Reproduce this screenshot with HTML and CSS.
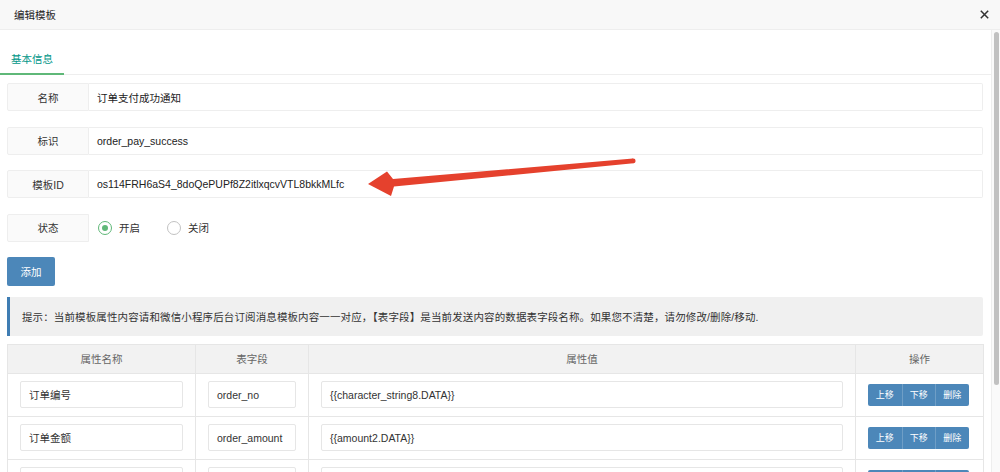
FILE: index.html
```html
<!DOCTYPE html>
<html lang="zh">
<head>
<meta charset="utf-8">
<title>编辑模板</title>
<link rel="stylesheet" href="styles.css">
</head>
<body>
<div class="dialog">
  <div class="dialog-header">
    <span class="dialog-title">编辑模板</span>
    <svg class="close" width="9" height="9" viewBox="0 0 9 9"><path d="M0.8 0.8L8.2 8.2M8.2 0.8L0.8 8.2" stroke="#333" stroke-width="1.5" fill="none"/></svg>
  </div>
  <div class="dialog-body">
    <div class="content">
      <div class="tabs"><div class="tab active">基本信息</div></div>
      <div class="form">
        <div class="form-item"><div class="label">名称</div><div class="value">订单支付成功通知</div></div>
        <div class="form-item"><div class="label">标识</div><div class="value">order_pay_success</div></div>
        <div class="form-item"><div class="label">模板ID</div><div class="value">os114FRH6aS4_8doQePUPf8Z2itlxqcvVTL8bkkMLfc</div></div>
        <div class="form-item radio-item">
          <div class="label">状态</div>
          <div class="radios">
            <span class="radio checked"><i class="circle"></i>开启</span>
            <span class="radio"><i class="circle"></i>关闭</span>
          </div>
        </div>
        <div class="actions"><button class="btn">添加</button></div>
        <div class="tip">提示：当前模板属性内容请和微信小程序后台订阅消息模板内容一一对应，【表字段】是当前发送内容的数据表字段名称。如果您不清楚，请勿修改/删除/移动.</div>
        <table class="attr-table">
          <colgroup><col class="c1"><col class="c2"><col class="c3"><col class="c4"></colgroup>
          <thead>
            <tr><th>属性名称</th><th>表字段</th><th>属性值</th><th>操作</th></tr>
          </thead>
          <tbody>
            <tr>
              <td><div class="input">订单编号</div></td>
              <td><div class="input">order_no</div></td>
              <td><div class="input">{{character_string8.DATA}}</div></td>
              <td class="ops"><div class="btn-group"><button class="sbtn">上移</button><button class="sbtn">下移</button><button class="sbtn">删除</button></div></td>
            </tr>
            <tr>
              <td><div class="input">订单金额</div></td>
              <td><div class="input">order_amount</div></td>
              <td><div class="input">{{amount2.DATA}}</div></td>
              <td class="ops"><div class="btn-group"><button class="sbtn">上移</button><button class="sbtn">下移</button><button class="sbtn">删除</button></div></td>
            </tr>
            <tr>
              <td><div class="input"></div></td>
              <td><div class="input"></div></td>
              <td><div class="input"></div></td>
              <td class="ops"><div class="btn-group"><button class="sbtn" aria-label="上移"></button><button class="sbtn" aria-label="下移"></button><button class="sbtn" aria-label="删除"></button></div></td>
            </tr>
          </tbody>
        </table>
      </div>
    </div>
    <div class="scrollbar"><div class="thumb"></div></div>
  </div>
  <svg class="arrow" width="1000" height="472" viewBox="0 0 1000 472">
    <polygon points="633,158.6 393,179 387,171.5 368,184 391,196 394,186.5 633.5,163.2" fill="#e5412d"/>
    <circle cx="633.3" cy="160.9" r="2.3" fill="#e5412d"/>
  </svg>
</div>
</body>
</html>
```
FILE: styles.css
```css
* { box-sizing: border-box; }
html, body { margin: 0; padding: 0; }
body {
  font-family: "Liberation Sans", "Noto Sans CJK SC", sans-serif;
  font-size: 10.5px;
  color: #333;
  background: #fff;
  overflow: hidden;
}
.dialog {
  position: relative;
  width: 1000px;
  height: 472px;
  overflow: hidden;
  display: flex;
  flex-direction: column;
}
.dialog-header {
  flex-shrink: 0;
  height: 30px;
  border-bottom: 1px solid #eee;
  background: #f8f8f8;
  display: flex;
  align-items: center;
  justify-content: space-between;
  padding: 0 11px 1px 14px;
  color: #222;
}
.close { display: block; }
.dialog-body {
  flex: 1;
  min-height: 0;
  display: flex;
}
.content {
  flex: 1;
  padding-top: 15px;
  overflow: hidden;
}
.scrollbar {
  width: 9px;
  border-left: 1px solid #eee;
  padding: 2px 0 0 2px;
  background: #fafafa;
}
.thumb {
  width: 5px;
  height: 353px;
  border-radius: 3px;
  background: #c1c1c1;
}
.tabs {
  display: flex;
  height: 30px;
  border-bottom: 1px solid #eee;
}
.tab {
  position: relative;
  padding: 0 11px;
  line-height: 29px;
  color: #009688;
}
.tab.active::after {
  content: "";
  position: absolute;
  left: 0;
  right: 0;
  bottom: -1px;
  height: 2px;
  background: #5fb878;
}
.form {
  padding: 8px 8px 0 7px;
}
.form-item {
  display: flex;
  height: 28px;
  margin-bottom: 15.5px;
}
.label {
  width: 82px;
  flex-shrink: 0;
  border: 1px solid #eee;
  border-radius: 2px 0 0 2px;
  background: #fafafa;
  display: flex;
  align-items: center;
  justify-content: center;
}
.value {
  flex: 1;
  border: 1px solid #eee;
  border-left: none;
  border-radius: 0 2px 2px 0;
  padding-left: 8px;
  display: flex;
  align-items: center;
  color: #222;
}
.radio-item { margin-bottom: 15px; }
.radios {
  display: flex;
  align-items: center;
  padding-left: 9px;
}
.radio {
  display: flex;
  align-items: center;
  margin-right: 27px;
}
.circle {
  width: 14px;
  height: 14px;
  border: 1px solid #c2c2c2;
  border-radius: 50%;
  margin-right: 7px;
  display: flex;
  align-items: center;
  justify-content: center;
}
.radio.checked .circle { border-color: #5fb878; }
.radio.checked .circle::after {
  content: "";
  width: 6px;
  height: 6px;
  border-radius: 50%;
  background: #5fb878;
}
.actions { margin-bottom: 11px; }
.btn {
  width: 48px;
  height: 29px;
  border: none;
  border-radius: 2px;
  background: #4c87b9;
  color: #fff;
  font: inherit;
  padding: 0;
}
.tip {
  height: 39px;
  border-left: 3px solid #3f7db3;
  background: #f0f0f0;
  padding-left: 12px;
  display: flex;
  align-items: center;
  margin-bottom: 8px;
  border-radius: 0 2px 2px 0;
  letter-spacing: 0.12px;
}
.attr-table {
  width: 976px;
  border-collapse: collapse;
  table-layout: fixed;
}
.c1 { width: 188px; }
.c2 { width: 113px; }
.c3 { width: 547px; }
.c4 { width: 128px; }
.attr-table th {
  height: 29px;
  background: #f2f2f2;
  color: #666;
  font-weight: normal;
  border: 1px solid #e6e6e6;
  padding: 0;
}
.attr-table td {
  height: 43px;
  border: 1px solid #e6e6e6;
  padding: 0 12px;
}
.input {
  height: 27px;
  border: 1px solid #e6e6e6;
  border-radius: 2px;
  padding-left: 8px;
  display: flex;
  align-items: center;
  white-space: nowrap;
  overflow: hidden;
}
.ops { text-align: center; }
.btn-group {
  display: inline-flex;
  margin-right: 3px;
  vertical-align: middle;
}
.sbtn {
  width: 33.5px;
  height: 22px;
  border: none;
  border-left: 1px solid #6f9ec6;
  background: #4c87b9;
  color: #fff;
  font-family: inherit;
  font-size: 9px;
  padding: 0;
}
.sbtn:first-child { border-left: none; border-radius: 2px 0 0 2px; }
.sbtn:last-child { border-radius: 0 2px 2px 0; }
.arrow {
  position: absolute;
  left: 0;
  top: 0;
  pointer-events: none;
}
```
